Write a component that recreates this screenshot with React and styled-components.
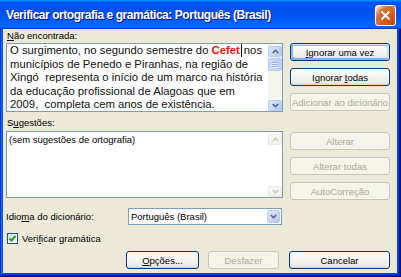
import styled, { createGlobalStyle } from "styled-components";

const Global = createGlobalStyle`
  html, body { margin: 0; padding: 0; background: #fff; }
  body { font-family: "Liberation Sans", Arial, sans-serif; }
  * { box-sizing: border-box; }
`;

const Window = styled.div`
  width: 401px;
  height: 277px;
  display: flex;
  flex-direction: column;
  background: #ece9d8;
  box-shadow: inset -1px -1px #00138c, inset 1px 1px #0831d9,
    inset -2px -2px #001ea0, inset 2px 2px #166aee,
    inset -3px -3px #003bda, inset 3px 3px #0855dd,
    inset -4px -4px #0847d7;
`;

const TitleBar = styled.div`
  height: 29px;
  flex-shrink: 0;
  display: flex;
  align-items: center;
  justify-content: space-between;
  padding: 0 5px 0 6px;
  background: linear-gradient(180deg, #0997ff, #0053ee 8%, #0050ee 40%, #06f 88%, #06f 93%, #005bff 95%, #003dd7 96%, #003dd7);
`;

const Title = styled.span`
  color: #fff;
  font-weight: bold;
  font-size: 12px;
  letter-spacing: -0.45px;
  text-shadow: 1px 1px #0f1089;
  margin-top: 1px;
`;

const CloseButton = styled.div`
  width: 21px;
  height: 21px;
  border: 1px solid #fff;
  border-radius: 3px;
  display: flex;
  align-items: center;
  justify-content: center;
  background: radial-gradient(circle at 90% 90%, #cc4600 0%, #dc6527 55%, #cd7546 70%, #ffccb2 90%, #fff 100%);
  margin-top: 2px;
`;

const Body = styled.div`
  flex: 1;
  display: flex;
  flex-direction: column;
  padding: 0 11px 9px 6px;
  font-size: 9.5px;
  color: #000;
`;

const TopGrid = styled.div`
  display: grid;
  grid-template-columns: 277px 100px;
  column-gap: 7px;
`;

const LeftColumn = styled.div`
  display: flex;
  flex-direction: column;
`;

const FieldLabel = styled.div`
  height: ${(p) => p.$h}px;
  line-height: 14px;
  padding-top: ${(p) => p.$h - 15}px;
  padding-left: 1px;
`;

const Box = styled.div`
  height: ${(p) => p.$h}px;
  border: 1px solid #7f9db9;
  background: #fff;
  display: flex;
`;

const SentenceArea = styled.div`
  flex: 1;
  padding: 0 0 0 3px;
  font-size: 11.3px;
  line-height: 13.6px;
  color: #111;
  white-space: nowrap;
  overflow: hidden;
`;

const Wrong = styled.span`
  color: #ff1010;
  font-weight: bold;
`;

const Caret = styled.span`
  display: inline-block;
  width: 1px;
  height: 13px;
  background: #000;
  vertical-align: -3px;
  margin: 0 2px 0 1px;
`;

const SuggestionArea = styled.div`
  flex: 1;
  padding: 2px 0 0 2px;
  font-size: 9.5px;
  line-height: 12px;
`;

const ScrollBar = styled.div`
  width: 14px;
  display: flex;
  flex-direction: column;
  padding-top: 2px;
  background: ${(p) => (p.$disabled ? "#fff" : "#f6f5ee")};
`;

const ScrollButton = styled.div`
  height: 11px;
  border-radius: 2px;
  display: flex;
  align-items: center;
  justify-content: center;
  border: 1px solid ${(p) => (p.$disabled ? "#ebe9df" : "#b7cbf6")};
  background: ${(p) =>
    p.$disabled
      ? "linear-gradient(180deg, #fbfbf8, #f0efe8)"
      : "linear-gradient(135deg, #dfe8fd, #c3d3fb 60%, #b3c7f6)"};
`;

const ScrollThumb = styled.div`
  height: 13px;
  margin-top: 1px;
  border-radius: 2px;
  border: 1px solid #b7cbf6;
  background: linear-gradient(90deg, #cbdafc, #bed0fa);
  display: flex;
  flex-direction: column;
  align-items: center;
  justify-content: center;
  gap: 1px;
`;

const Grip = styled.div`
  width: 6px;
  height: 1px;
  background: #8fb0f5;
  box-shadow: 0 1px #eef3ff;
`;

const ScrollTrack = styled.div`
  flex: 1;
`;

const RightColumn = styled.div`
  display: flex;
  flex-direction: column;
  padding-top: 14px;
  gap: 7px;
`;

const Spacer = styled.div`
  height: 7px;
`;

const Button = styled.div`
  width: ${(p) => p.$w || 100}px;
  height: 18px;
  margin-left: ${(p) => p.$ml || 0}px;
  border: 1px solid ${(p) => (p.$disabled ? "#c9c7ba" : "#003c74")};
  border-radius: 3px;
  display: flex;
  align-items: center;
  justify-content: center;
  font-size: 9.5px;
  color: ${(p) => (p.$disabled ? "#aca899" : "#000")};
  background: ${(p) =>
    p.$disabled ? "#f5f4ea" : "linear-gradient(180deg, #fff, #ecebe5 86%, #d8d0c4)"};
  box-shadow: ${(p) =>
    p.$default
      ? "inset -1px 1px #cee7ff, inset 1px 2px #98b8ea, inset -2px 2px #bcd4f6, inset 1px -1px #89ade4, inset 2px -2px #89ade4"
      : "none"};
`;

const LanguageRow = styled.div`
  display: grid;
  grid-template-columns: 122px 154px;
  align-items: center;
  margin-top: 8px;
  height: 17px;
`;

const Select = styled.div`
  height: 17px;
  border: 1px solid #7f9db9;
  background: #fff;
  display: flex;
  align-items: center;
  justify-content: space-between;
  padding: 1px 1px 1px 2px;
`;

const DropButton = styled.div`
  width: 13px;
  height: 13px;
  border-radius: 2px;
  border: 1px solid #b7cbf6;
  background: linear-gradient(135deg, #dfe8fd, #c3d3fb 60%, #b3c7f6);
  display: flex;
  align-items: center;
  justify-content: center;
`;

const CheckRow = styled.div`
  display: flex;
  align-items: center;
  gap: 4px;
  margin-top: 7px;
  padding-left: 1px;
  height: 12px;
`;

const CheckBox = styled.div`
  width: 11px;
  height: 11px;
  border: 1px solid #1c5180;
  background: linear-gradient(135deg, #dcdcd7, #fff);
  display: flex;
  align-items: center;
  justify-content: center;
`;

const ActionRow = styled.div`
  display: flex;
  justify-content: flex-end;
  gap: ${(p) => p.$gap}px;
  margin-top: 7px;
`;

const Chevron = ({ up, color }) => (
  <svg width="7" height="5" viewBox="0 0 7 5">
    <polyline
      points={up ? "0.8,4 3.5,1.3 6.2,4" : "0.8,1 3.5,3.7 6.2,1"}
      fill="none"
      stroke={color}
      strokeWidth="1.6"
    />
  </svg>
);

function Scroll({ disabled }) {
  const color = disabled ? "#c9c7ba" : "#4d6185";
  return (
    <ScrollBar $disabled={disabled}>
      <ScrollButton $disabled={disabled}>
        <Chevron up color={color} />
      </ScrollButton>
      {!disabled && (
        <ScrollThumb>
          <Grip />
          <Grip />
          <Grip />
        </ScrollThumb>
      )}
      <ScrollTrack />
      <ScrollButton $disabled={disabled}>
        <Chevron color={color} />
      </ScrollButton>
    </ScrollBar>
  );
}

export default function App() {
  return (
    <>
      <Global />
      <Window>
        <TitleBar>
          <Title>Verificar ortografia e gramática: Português (Brasil)</Title>
          <CloseButton>
            <svg width="11" height="11" viewBox="0 0 11 11">
              <path d="M1.5 1.5 L9.5 9.5 M9.5 1.5 L1.5 9.5" stroke="#fff" strokeWidth="2" />
            </svg>
          </CloseButton>
        </TitleBar>
        <Body>
          <TopGrid>
            <LeftColumn>
              <FieldLabel $h={14}>
                <u>N</u>ão encontrada:
              </FieldLabel>
              <Box $h={69}>
                <SentenceArea>
                  <div>
                    O surgimento, no segundo semestre do <Wrong>Cefet</Wrong>
                    <Caret />nos
                  </div>
                  <div>municípios de Penedo e Piranhas, na região de</div>
                  <div>Xingó&nbsp; representa o início de um marco na história</div>
                  <div>da educação profissional de Alagoas que em</div>
                  <div>2009,&nbsp; completa cem anos de existência.</div>
                </SentenceArea>
                <Scroll />
              </Box>
              <FieldLabel $h={19}>
                S<u>u</u>gestões:
              </FieldLabel>
              <Box $h={67}>
                <SuggestionArea>(sem sugestões de ortografia)</SuggestionArea>
                <Scroll disabled />
              </Box>
            </LeftColumn>
            <RightColumn>
              <Button $default>
                <span>
                  <u>I</u>gnorar uma vez
                </span>
              </Button>
              <Button>
                <span>
                  Ignorar <u>t</u>odas
                </span>
              </Button>
              <Button $disabled>Adicionar ao dicionário</Button>
              <Spacer />
              <Button $disabled>Alterar</Button>
              <Button $disabled>Alterar todas</Button>
              <Button $disabled>AutoCorreção</Button>
            </RightColumn>
          </TopGrid>
          <LanguageRow>
            <span>
              Idio<u>m</u>a do dicionário:
            </span>
            <Select>
              <span>Português (Brasil)</span>
              <DropButton>
                <Chevron color="#4d6185" />
              </DropButton>
            </Select>
          </LanguageRow>
          <CheckRow>
            <CheckBox>
              <svg width="9" height="9" viewBox="0 0 9 9">
                <polyline points="1.5,4.5 3.5,6.5 7.5,2" fill="none" stroke="#21a121" strokeWidth="2" />
              </svg>
            </CheckBox>
            <span>
              Veri<u>f</u>icar gramática
            </span>
          </CheckRow>
          <ActionRow $gap={9}>
            <Button $w={73}>
              <span>
                <u>O</u>pções...
              </span>
            </Button>
            <Button $w={71} $disabled>
              Desfazer
            </Button>
            <Button $w={101} $ml={1}>
              Cancelar
            </Button>
          </ActionRow>
        </Body>
      </Window>
    </>
  );
}
